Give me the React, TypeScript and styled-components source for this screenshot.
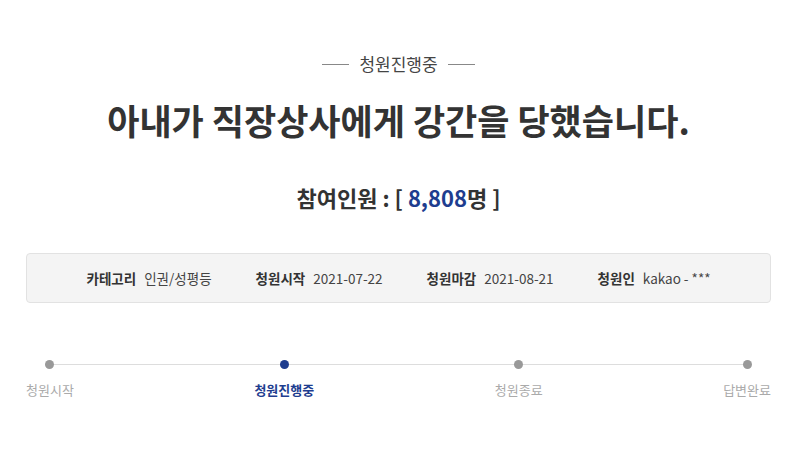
import { createGlobalStyle, styled } from "styled-components";

const GlobalStyle = createGlobalStyle`
  body {
    margin: 0;
    background: #fff;
    font-family: "Noto Sans CJK KR", "Noto Sans", sans-serif;
    color: #333;
  }
`;

const Page = styled.div`
  display: flex;
  flex-direction: column;
  align-items: center;
  padding: 52px 29px 0 26px;
`;

const Status = styled.div`
  display: flex;
  align-items: center;
  gap: 10px;
  font-size: 17px;
  color: #444;
  line-height: 24px;

  &::before,
  &::after {
    content: "";
    width: 27px;
    height: 1px;
    background: #888;
  }
`;

const Title = styled.h1`
  margin: 18px 0 0 0;
  font-size: 35px;
  font-weight: 700;
  line-height: 52px;
  color: #333;
`;

const Count = styled.div`
  margin-top: 36px;
  font-size: 22px;
  font-weight: 700;
  line-height: 30px;
  color: #333;

  & strong {
    color: #1e3d8f;
    font-weight: 700;
  }
`;

const InfoBox = styled.div`
  display: flex;
  justify-content: center;
  gap: 44px;
  align-self: stretch;
  margin-top: 41px;
  height: 48px;
  align-items: center;
  background: #f4f4f4;
  border: 1px solid #e2e2e2;
  border-radius: 4px;
  font-size: 13.5px;
  color: #444;
`;

const Info = styled.div`
  display: flex;
  gap: 8px;

  & b {
    font-weight: 700;
    color: #333;
  }
`;

const Steps = styled.div`
  position: relative;
  display: flex;
  justify-content: space-between;
  align-self: stretch;
  margin-top: 56px;

  &::before {
    content: "";
    position: absolute;
    left: 24px;
    right: 24px;
    top: 5px;
    height: 1px;
    background: #ddd;
  }
`;

const Step = styled.div<{ $active?: boolean }>`
  position: relative;
  display: flex;
  flex-direction: column;
  align-items: center;
  gap: 12px;
  font-size: 13px;
  line-height: 18px;
  color: ${(p) => (p.$active ? "#1e3d8f" : "#aaa")};
  font-weight: ${(p) => (p.$active ? 700 : 400)};
`;

const Dot = styled.span<{ $active?: boolean }>`
  width: 9px;
  height: 9px;
  margin-top: 1px;
  border-radius: 50%;
  background: ${(p) => (p.$active ? "#1e3d8f" : "#999")};
`;

const steps = ["청원시작", "청원진행중", "청원종료", "답변완료"];

const App = () => {
  return (
    <>
      <GlobalStyle />
      <Page>
        <Status>청원진행중</Status>
        <Title>아내가 직장상사에게 강간을 당했습니다.</Title>
        <Count>
          참여인원 : [ <strong>8,808</strong>명 ]
        </Count>
        <InfoBox>
          <Info>
            <b>카테고리</b> 인권/성평등
          </Info>
          <Info>
            <b>청원시작</b> 2021-07-22
          </Info>
          <Info>
            <b>청원마감</b> 2021-08-21
          </Info>
          <Info>
            <b>청원인</b> kakao - ***
          </Info>
        </InfoBox>
        <Steps>
          {steps.map((s, i) => (
            <Step key={s} $active={i === 1}>
              <Dot $active={i === 1} />
              {s}
            </Step>
          ))}
        </Steps>
      </Page>
    </>
  );
};

export default App;
